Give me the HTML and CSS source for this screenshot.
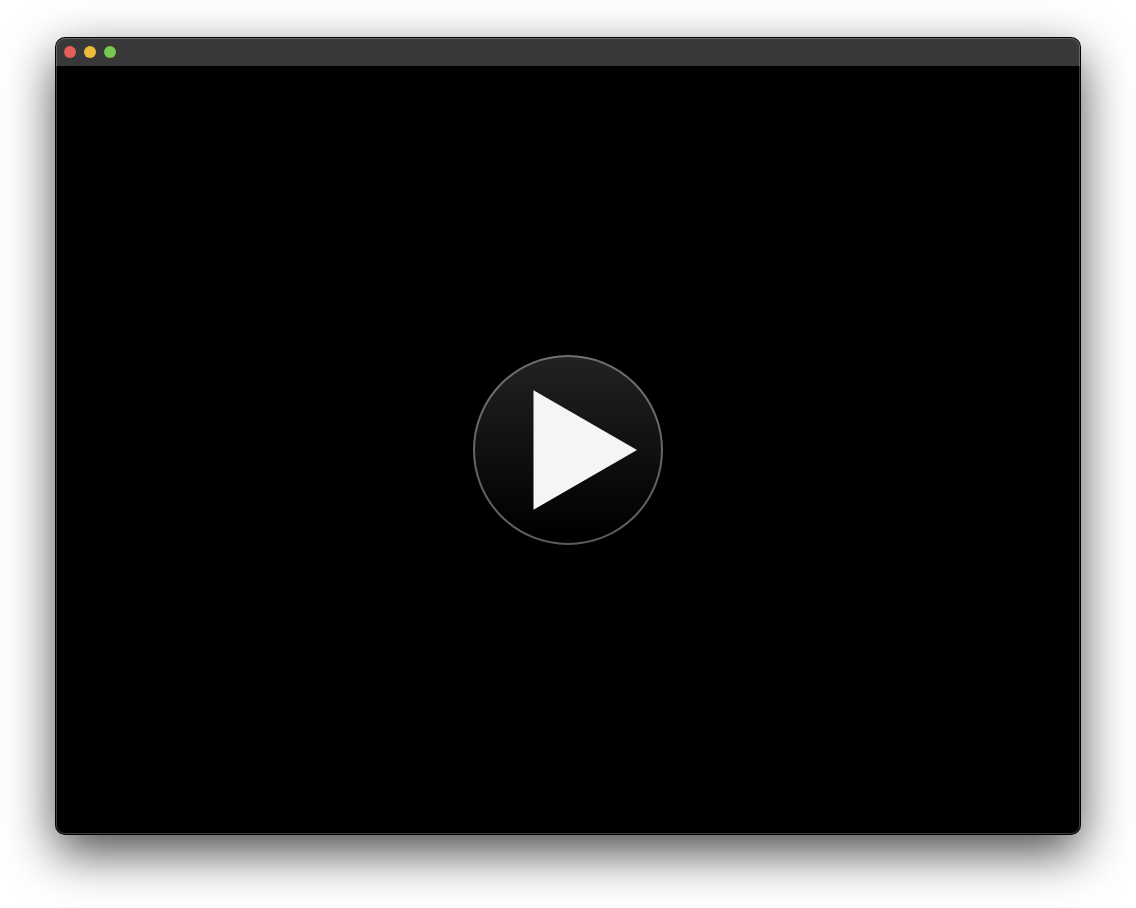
FILE: index.html
```html
<!DOCTYPE html>
<html lang="en">
<head>
<meta charset="utf-8">
<meta name="viewport" content="width=device-width, initial-scale=1">
<link rel="stylesheet" href="styles.css">
</head>
<body class="desktop">
<main class="window">
  <header class="titlebar">
    <button class="light close" type="button" aria-label="Close"></button>
    <button class="light minimize" type="button" aria-label="Minimize"></button>
    <button class="light maximize" type="button" aria-label="Maximize"></button>
  </header>
  <section class="stage">
    <button class="play" type="button" aria-label="Play">
      <svg class="play-icon" viewBox="0 0 190 190" aria-hidden="true">
        <defs>
          <linearGradient id="face" x1="0" y1="0" x2="0" y2="1">
            <stop offset="0" stop-color="#222"/>
            <stop offset="0.95" stop-color="#000"/>
          </linearGradient>
          <linearGradient id="rim" x1="0" y1="0" x2="0" y2="1">
            <stop offset="0" stop-color="#707070"/>
            <stop offset="1" stop-color="#5c5c5c"/>
          </linearGradient>
        </defs>
        <circle cx="95" cy="95" r="94" fill="url(#face)" stroke="url(#rim)" stroke-width="2"/>
        <path d="M60.5 35.2L164 95L60.5 154.8Z" fill="#f5f5f5"/>
      </svg>
    </button>
  </section>
</main>
</body>
</html>
```
FILE: styles.css
```css
* {
  box-sizing: border-box;
}

.desktop {
  margin: 0;
  min-height: 100vh;
  padding: 38px 56px 74px;
  display: flex;
  background: #fff;
  overflow: hidden;
}

.window {
  position: relative;
  flex: 1;
  display: flex;
  flex-direction: column;
  border-radius: 9px;
  background: #000;
  box-shadow: 0 0 0 1px #000, 0 18px 50px rgba(0, 0, 0, 0.72);
}

.window::after {
  content: "";
  position: absolute;
  inset: 0;
  border: 1px solid rgba(255, 255, 255, 0.24);
  border-radius: inherit;
  pointer-events: none;
}

.titlebar {
  height: 28px;
  padding: 0 8px;
  display: flex;
  align-items: center;
  gap: 8px;
  background: #383838;
  border-radius: 9px 9px 0 0;
}

.light {
  width: 12px;
  height: 12px;
  padding: 0;
  border: 0;
  border-radius: 50%;
}

.close {
  background: #e35f57;
}

.minimize {
  background: #edbc3b;
}

.maximize {
  background: #74c94e;
}

.stage {
  flex: 1;
  display: flex;
  align-items: center;
  justify-content: center;
}

.play {
  width: 190px;
  height: 190px;
  padding: 0;
  border: 0;
  border-radius: 50%;
  background: none;
  cursor: pointer;
}

.play-icon {
  display: block;
  width: 100%;
  height: 100%;
}
```
